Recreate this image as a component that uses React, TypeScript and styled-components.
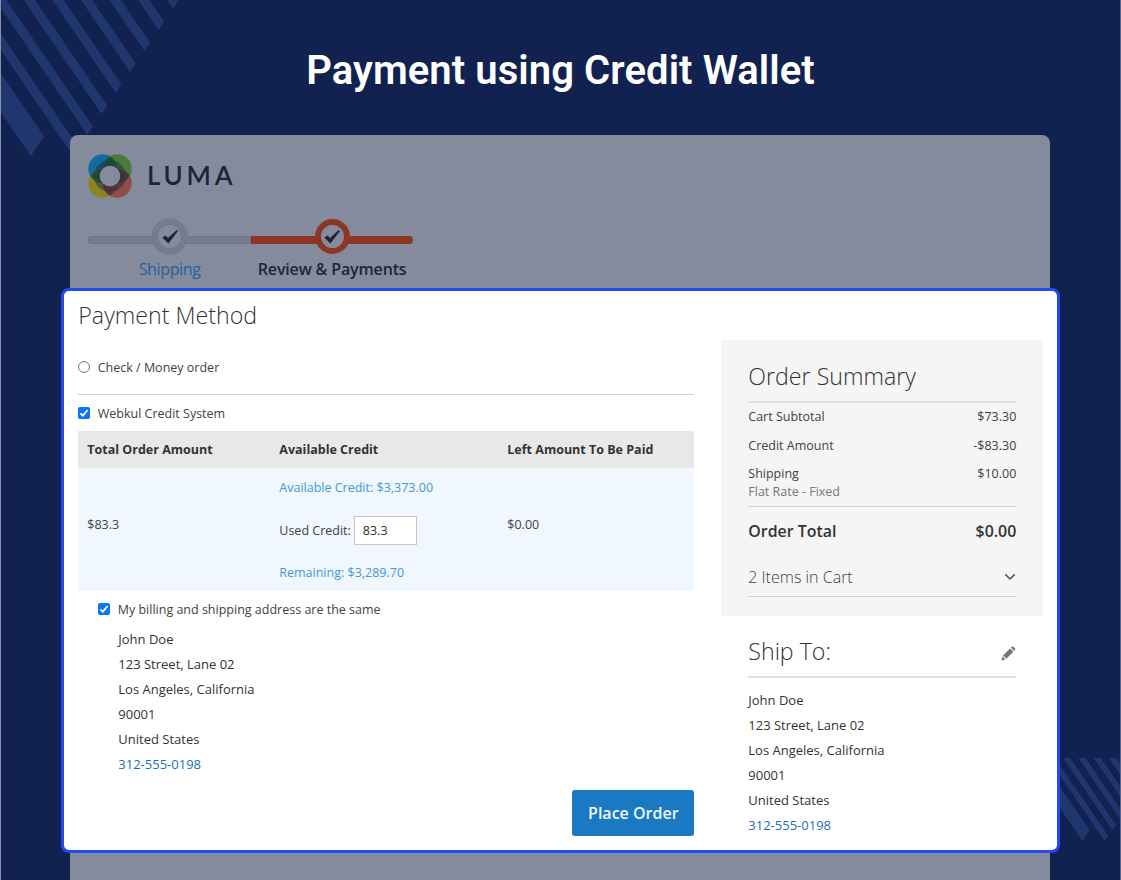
import React from 'react';
import styled, { createGlobalStyle, css } from 'styled-components';

const GlobalStyle = createGlobalStyle`
  * { box-sizing: border-box; }
  body { margin: 0; background: #112150; font-family: 'Open Sans', 'Noto Sans', sans-serif; color: #424242; }
`;

const Page = styled.main`
  position: relative;
  width: 1121px;
  height: 880px;
  overflow: hidden;
  background: #112150;
  border-left: 1px solid #8791a6;
  border-right: 1px solid #5a678c;
`;

const Stripes = styled.svg`
  position: absolute;
  top: 0;
  left: -1px;
  fill: #20366f;
`;

const Title = styled.h1`
  position: relative;
  margin: 0;
  height: 135px;
  padding-top: 47px;
  text-align: center;
  font: 600 40px/48px Roboto, sans-serif;
  letter-spacing: 0.08px;
  color: #fff;
`;

const StoreCard = styled.section`
  position: relative;
  margin: 0 70px 0 69.4px;
  height: 760px;
  border-radius: 8px;
  background: #848b9d;
`;

const StoreHeader = styled.header`
  height: 153px;
  padding: 19px 18px 0;
`;

const Brand = styled.div`
  display: flex;
  align-items: center;
  gap: 14.5px;
  height: 44px;
`;

const BrandName = styled.span`
  font: 600 26px/42px Lato, sans-serif;
  height: 44px;
  letter-spacing: 3.8px;
  color: #1e2338;
`;

const Steps = styled.ol`
  display: flex;
  width: 325px;
  margin: 21px 0 0;
  padding: 0;
  list-style: none;
`;

const Step = styled.li<{ $active?: boolean }>`
  display: flex;
  flex-direction: column;
  align-items: center;
  flex: 1;
  font-size: 16px;
  line-height: 22px;
  font-weight: ${p => (p.$active ? 600 : 400)};
  letter-spacing: ${p => (p.$active ? '-0.15px' : '-0.35px')};
  color: ${p => (p.$active ? '#212437' : '#285f98')};
`;

const StepTrack = styled.div<{ $active?: boolean }>`
  display: flex;
  justify-content: center;
  align-items: center;
  width: 100%;
  height: 8px;
  margin: 16.5px 0 14.5px;
  background: ${p => (p.$active ? '#8d3623' : '#757c8f')};
  ${p => p.$active
    ? css`border-radius: 0 4px 4px 0;`
    : css`border-radius: 4px 0 0 4px; box-shadow: inset 0 0 0 1px #6e7588;`}
`;

const StepMark = styled.span<{ $active?: boolean }>`
  display: grid;
  place-items: center;
  flex: none;
  width: 35px;
  height: 35px;
  margin-top: -6px;
  border-radius: 50%;
  border: ${p => (p.$active ? '6px solid #8d3623' : '5px solid #757c8f')};
  box-shadow: ${p => (p.$active ? 'none' : 'inset 0 0 0 1px #6e7588, 0 0 0 0.5px #6e7588')};
  background: #848b9d;
`;

const Checkout = styled.div`
  display: grid;
  grid-template-columns: 616px 322px;
  column-gap: 27px;
  width: 999px;
  height: 565px;
  margin-left: -9.4px;
  padding-left: 14.3px;
  border: 3px solid #2349f0;
  border-radius: 8px;
  background: #fff;
`;

const Column = styled.div`
  display: flex;
  flex-direction: column;
`;

const Heading = styled.h2`
  margin: 0;
  height: 50px;
  font-weight: 300;
  font-size: 23.2px;
  line-height: 48px;
  color: #333;
`;

const Option = styled.label<{ $height: number; $indent?: number }>`
  display: flex;
  align-items: center;
  gap: 7.4px;
  height: ${p => p.$height}px;
  padding-left: ${p => p.$indent ?? 0}px;
  font-size: 12.5px;
`;

const PaymentChoice = styled(Option)`
  padding-bottom: 1px;
`;

const Radio = styled.span`
  width: 12px;
  height: 12px;
  border: 1px solid #767676;
  border-radius: 50%;
  background: #fff;
`;

const Check = styled.span`
  display: grid;
  place-items: center;
  width: 12px;
  height: 12px;
  border-radius: 2px;
  background: #0b76f5;
`;

const Divider = styled.hr<{ $soft?: boolean }>`
  width: 100%;
  height: ${p => (p.$soft ? 2 : 1)}px;
  margin: ${p => (p.$soft ? '-1px' : '0')} 0 0;
  border: 0;
  background: ${p => (p.$soft ? '#e0e0e0' : '#d2d2d2')};
`;

const CreditTable = styled.div`
  display: grid;
  grid-template-columns: 192px 228px 1fr;
  grid-template-rows: 37px 123px;
  font-size: 12.5px;
`;

const HeadCell = styled.div`
  display: flex;
  align-items: center;
  padding: 0 0 1px 9px;
  font-weight: 700;
  color: #333;
  background: #e8e8e8;
`;

const Cell = styled.div`
  display: flex;
  flex-direction: column;
  justify-content: center;
  padding: 0 0 11px 9px;
  background: #f0f7fe;
`;

const CreditCell = styled(Cell)`
  justify-content: flex-start;
  padding: 11px 0 0 9px;
  line-height: 18px;
`;

const CreditNote = styled.span`
  color: #4199d6;
`;

const UsedCredit = styled.label`
  display: flex;
  align-items: center;
  gap: 3px;
  height: 29px;
  margin: 19px 0;
`;

const Amount = styled.span`
  width: 63px;
  height: 29px;
  padding-left: 8px;
  border: 1px solid #c6c6c6;
  line-height: 28px;
  background: #fff;
  color: #303030;
`;

const Address = styled.address<{ $indent?: number }>`
  display: flex;
  flex-direction: column;
  padding-left: ${p => p.$indent ?? 0}px;
  font-style: normal;
  font-size: 13px;
  line-height: 25px;
  color: #333;
`;

const Phone = styled.a`
  color: #1a6fbd;
`;

const PlaceOrder = styled.button`
  align-self: flex-end;
  width: 122px;
  height: 46px;
  margin-top: 13px;
  padding: 0;
  border: 0;
  border-radius: 3px;
  background: #1979c3;
  color: #f2f7fc;
  font: 600 16px 'Open Sans', sans-serif;
`;

const Summary = styled.section`
  height: 276px;
  margin-top: 49px;
  padding: 12px 27px 0 27px;
  background: #f5f5f5;
`;

const Totals = styled.div`
  display: flex;
  flex-direction: column;
  gap: 10.7px;
  height: 103px;
  padding-top: 5px;
  font-size: 12.5px;
  line-height: 18px;
`;

const Row = styled.div`
  display: flex;
  justify-content: space-between;
  align-items: center;
`;

const Method = styled.div`
  margin-top: -11px;
  color: #777;
`;

const GrandTotal = styled(Row)`
  height: 48px;
  padding-bottom: 1px;
  font-size: 15.9px;
  font-weight: 600;
  color: #333;
`;

const CartToggle = styled(Row)`
  height: 41px;
  padding-top: 2px;
  font-size: 16px;
  font-weight: 300;
`;

const ShipTo = styled.section`
  padding: 11px 27px 0 27px;
`;

const PencilIcon = styled.svg`
  margin-top: 2px;
`;

const ShipAddress = styled.div`
  padding-top: 10px;
`;

function Tick() {
  return (
    <svg width="10" height="10" viewBox="0 0 10 10" fill="none" stroke="#fff" strokeWidth="1.8">
      <path d="M1.4 5.4 3.8 7.7 8.6 2" />
    </svg>
  );
}

function StepTick() {
  return (
    <svg width="18" height="16" viewBox="0 0 18 16" fill="#1f2338">
      <path d="M1.4 8.5 4.6 6.4 7 9 15.7 1 17 2 7.4 14.6Z" />
    </svg>
  );
}

const petal = 'M22 2.3A14.4 14.4 0 0 1 22 27.1A14.4 14.4 0 0 1 22 2.3Z';

function LumaMark() {
  return (
    <svg width="44" height="44" viewBox="0 0 44 44">
      <circle cx="14.7" cy="14.7" r="14.4" fill="#146a9e" />
      <circle cx="29.3" cy="14.7" r="14.4" fill="#4c7a3c" />
      <circle cx="14.7" cy="29.3" r="14.4" fill="#8c8423" />
      <circle cx="29.3" cy="29.3" r="14.4" fill="#8f4f42" />
      <circle cx="22" cy="22" r="16" fill="#172c4e" opacity=".5" />
      <g opacity=".85">
        <path d={petal} fill="#13483f" />
        <path d={petal} fill="#3f2f38" transform="rotate(90 22 22)" />
        <path d={petal} fill="#552e39" transform="rotate(180 22 22)" />
        <path d={petal} fill="#18453b" transform="rotate(270 22 22)" />
      </g>
      <circle cx="22" cy="22" r="10.3" fill="#848b9d" />
    </svg>
  );
}

const stripe = (x: number, y: number, w: number, h: number, len: number) =>
  `${x},${y} ${x + w},${y - h} ${x + w - 0.683 * len},${y - h - len} ${x - 0.683 * len},${y - len}`;

function AddressLines({ indent }: { indent?: number }) {
  return (
    <Address $indent={indent}>
      <span>John Doe</span>
      <span>123 Street, Lane 02</span>
      <span>Los Angeles, California</span>
      <span>90001</span>
      <span>United States</span>
      <Phone>312-555-0198</Phone>
    </Address>
  );
}

export default function App() {
  return (
    <Page>
      <GlobalStyle />
      <Stripes width="1121" height="880">
        <polygon points={stripe(31, 156.3, 13, 20, 200)} />
        {[0, 1, 2, 3, 4, 5, 6, 7].map(i => (
          <polygon key={i} points={stripe(73.1 + i * 14.25, 156 - i * 21, 5.6, 8.4, 200)} />
        ))}
        <svg x="1050" y="758" width="71" height="90">
          <polygon points={stripe(32.5, 83, 7, 11, 110)} />
          {[0, 1, 2, 3, 4].map(i => (
            <polygon key={i} points={stripe(54.6 + i * 7.8, 83 - i * 10.9, 3.6, 5.2, 110)} />
          ))}
        </svg>
      </Stripes>
      <Title>Payment using Credit Wallet</Title>
      <StoreCard>
        <StoreHeader>
          <Brand>
            <LumaMark />
            <BrandName>LUMA</BrandName>
          </Brand>
          <Steps>
            <Step>
              <StepTrack><StepMark><StepTick /></StepMark></StepTrack>
              Shipping
            </Step>
            <Step $active>
              <StepTrack $active><StepMark $active><StepTick /></StepMark></StepTrack>
              Review &amp; Payments
            </Step>
          </Steps>
        </StoreHeader>
        <Checkout>
          <Column>
            <Heading>Payment Method</Heading>
            <PaymentChoice $height={53}><Radio />Check / Money order</PaymentChoice>
            <Divider />
            <Option $height={36}><Check><Tick /></Check>Webkul Credit System</Option>
            <CreditTable>
              <HeadCell>Total Order Amount</HeadCell>
              <HeadCell>Available Credit</HeadCell>
              <HeadCell>Left Amount To Be Paid</HeadCell>
              <Cell>$83.3</Cell>
              <CreditCell>
                <CreditNote>Available Credit: $3,373.00</CreditNote>
                <UsedCredit>Used Credit: <Amount>83.3</Amount></UsedCredit>
                <CreditNote>Remaining: $3,289.70</CreditNote>
              </CreditCell>
              <Cell>$0.00</Cell>
            </CreditTable>
            <Option $height={36} $indent={20}>
              <Check><Tick /></Check>My billing and shipping address are the same
            </Option>
            <AddressLines indent={40} />
            <PlaceOrder>Place Order</PlaceOrder>
          </Column>
          <Column>
            <Summary>
              <Heading>Order Summary</Heading>
              <Divider $soft />
              <Totals>
                <Row><span>Cart Subtotal</span><span>$73.30</span></Row>
                <Row><span>Credit Amount</span><span>-$83.30</span></Row>
                <Row><span>Shipping</span><span>$10.00</span></Row>
                <Method>Flat Rate - Fixed</Method>
              </Totals>
              <Divider />
              <GrandTotal><span>Order Total</span><span>$0.00</span></GrandTotal>
              <CartToggle>
                <span>2 Items in Cart</span>
                <svg width="12" height="8" viewBox="0 0 12 8" fill="none" stroke="#555" strokeWidth="1.6">
                  <path d="M1.3 1.4 6 6 10.7 1.4" />
                </svg>
              </CartToggle>
              <Divider />
            </Summary>
            <ShipTo>
              <Row>
                <Heading>Ship To:</Heading>
                <PencilIcon width="15" height="15" viewBox="0 0 15 15" fill="#757575">
                  <path d="M.4 14.4 1.3 10.3 4.5 13.4ZM2 9.4 9 2.5 12.4 5.8 5.4 12.8ZM9.9 1.7 10.9.8Q11.7 0 12.6.9L14 2.3Q14.8 3.2 14 4L13.2 4.9Z" />
                </PencilIcon>
              </Row>
              <Divider $soft />
              <ShipAddress><AddressLines /></ShipAddress>
            </ShipTo>
          </Column>
        </Checkout>
      </StoreCard>
    </Page>
  );
}
